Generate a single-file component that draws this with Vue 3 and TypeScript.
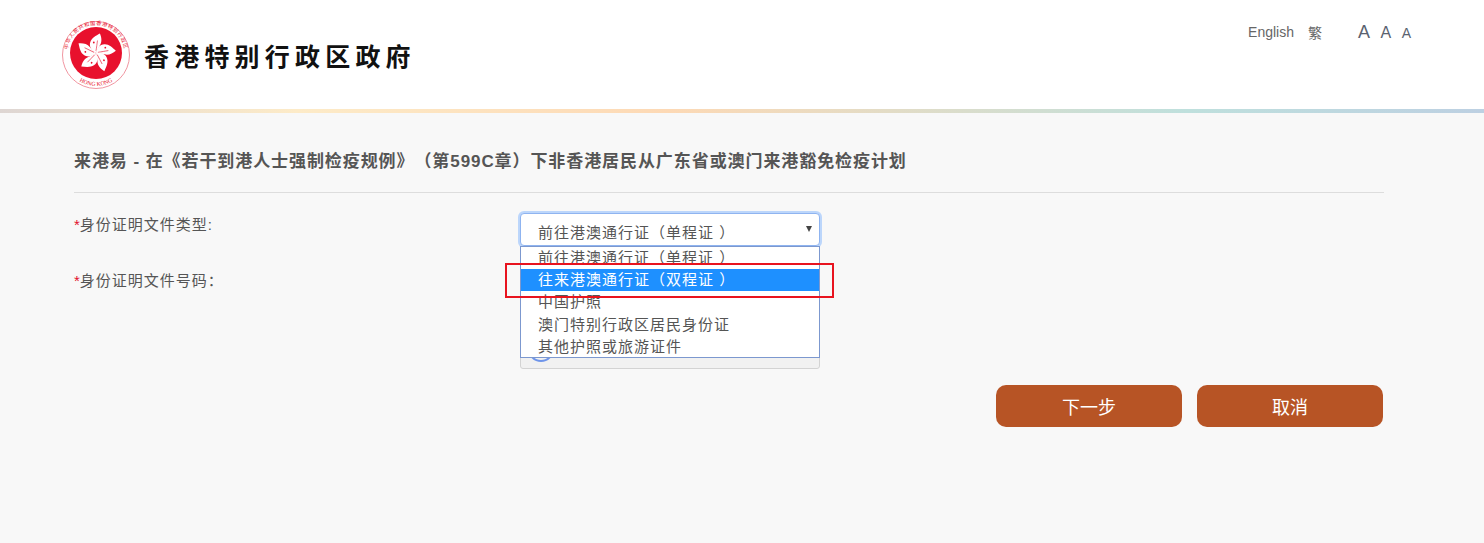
<script setup lang="ts">
const options = [
  "前往港澳通行证（单程证 ）",
  "往来港澳通行证（双程证 ）",
  "中国护照",
  "澳门特别行政区居民身份证",
  "其他护照或旅游证件",
];
const selected = 1;
const petals = [0, 72, 144, 216, 288];
</script>

<template>
  <div class="page">
    <header class="top">
      <div class="brand">
        <svg class="emblem" width="70" height="70" viewBox="0 0 70 70">
          <defs>
            <path id="ring-top" d="M 7.5 41 A 28.5 28.5 0 1 1 62.5 41" />
            <path id="ring-bottom" d="M 5.8 47 A 32 32 0 0 0 64.2 47" />
          </defs>
          <circle cx="35" cy="35" r="33.5" fill="#fff" stroke="#ee8a96" stroke-width="0.9" />
          <circle cx="35" cy="33" r="26" fill="#e8112d" />
          <text class="ring-text"><textPath href="#ring-top" startOffset="50%" text-anchor="middle">中华人民共和国香港特别行政区</textPath></text>
          <text class="ring-latin"><textPath href="#ring-bottom" startOffset="50%" text-anchor="middle">HONG KONG</textPath></text>
          <g v-for="a in petals" :key="a" :transform="`rotate(${a} 35 33)`">
            <path d="M35 33C30.5 30.8 27.6 26.3 29.4 21.8C30.7 17.9 35 15.6 38.9 13.4C40.6 17.3 41.2 21.8 38.9 25.2C37.8 27.4 36.1 29.6 35 33Z" fill="#fff" />
            <path d="M35 31C35.6 27 36 24 36.5 20.5" fill="none" stroke="#e8112d" stroke-width="0.6" />
            <circle cx="32.8" cy="22.5" r="0.9" fill="#e8112d" />
          </g>
        </svg>
        <span class="gov-name">香港特别行政区政府</span>
      </div>
      <div class="tools">
        <a class="lang">English</a>
        <a class="lang trad">繁</a>
        <div class="sizes">
          <span class="a-lg">A</span>
          <span class="a-md">A</span>
          <span class="a-sm">A</span>
        </div>
      </div>
    </header>
    <div class="rainbow"></div>

    <main class="content">
      <h1 class="title">来港易 - 在《若干到港人士强制检疫规例》（第599C章）下非香港居民从广东省或澳门来港豁免检疫计划</h1>

      <div class="form">
        <div class="labels">
          <label class="label first"><i>*</i>身份证明文件类型:</label>
          <label class="label second"><i>*</i>身份证明文件号码：</label>
        </div>
        <div class="fields">
          <div class="select">
            <span>{{ options[0] }}</span>
            <b class="caret"></b>
          </div>
          <div class="under">
            <span class="captcha-dot"></span>
          </div>
          <ul class="dropdown">
            <li v-for="(o, i) in options" :key="o" :class="{ active: i === selected }">{{ o }}</li>
          </ul>
          <div class="callout"></div>
        </div>
      </div>

      <div class="actions">
        <button class="btn">下一步</button>
        <button class="btn">取消</button>
      </div>
    </main>
  </div>
</template>

<style>
html, body {
  margin: 0;
  background: #f8f8f8;
}
</style>

<style scoped>
.page {
  width: 1484px;
  height: 543px;
  overflow: hidden;
  background: #f8f8f8;
  font-family: "Liberation Sans", "Noto Sans CJK SC", sans-serif;
  color: #555;
  text-spacing-trim: space-all;
}
.top {
  height: 109px;
  background: #fff;
  display: flex;
  justify-content: space-between;
  box-sizing: border-box;
  padding: 0 73px 0 61px;
}
.brand {
  display: flex;
  align-items: flex-start;
  padding-top: 20px;
}
.emblem {
  display: block;
}
.ring-text {
  font-size: 5.2px;
  fill: #e8112d;
  letter-spacing: 0.6px;
}
.ring-latin {
  font-size: 5.8px;
  fill: #e8112d;
  font-family: "Liberation Serif", serif;
}
.gov-name {
  margin: 21px 0 0 13px;
  font-size: 25px;
  line-height: 32px;
  font-weight: 700;
  letter-spacing: 5.2px;
  color: #111;
}
.tools {
  display: flex;
  align-items: center;
  height: 24px;
  margin-top: 20px;
  font-size: 14px;
}
.lang {
  color: #666;
}
.trad {
  margin-left: 14px;
  font-size: 14px;
}
.sizes {
  display: flex;
  align-items: baseline;
  gap: 10.5px;
  margin-left: 36px;
  color: #5a6270;
}
.a-lg { font-size: 18px; }
.a-md { font-size: 16px; }
.a-sm { font-size: 14px; }
.rainbow {
  height: 4px;
  background: linear-gradient(90deg, #ded6d3 0%, #fdebc8 20%, #fdd9b5 45%, #bfe0dd 80%, #bdd0e2 100%);
}
.content {
  margin: 0 100px 0 74px;
}
.title {
  margin: 0;
  padding: 38px 0 19px;
  border-bottom: 1px solid #ddd;
  font-size: 17px;
  line-height: 22px;
  font-weight: 700;
  letter-spacing: 0.92px;
  white-space: nowrap;
  color: #555;
}
.form {
  display: flex;
  margin-top: 20px;
}
.labels {
  width: 446px;
}
.label {
  display: block;
  font-size: 15px;
  line-height: 24px;
  letter-spacing: 1px;
  color: #555;
}
.label i {
  color: #e2122d;
  font-style: normal;
  letter-spacing: 0;
}
.second {
  margin-top: 32px;
}
.fields {
  position: relative;
  width: 300px;
}
.select {
  box-sizing: border-box;
  height: 33px;
  padding: 8px 0 0 17px;
  background: #fff;
  border: 1px solid #8fb4f0;
  border-radius: 4px;
  box-shadow: 0 0 0 2px #bcd6fb;
  font-size: 15px;
  line-height: 22px;
  letter-spacing: 1px;
  color: #555;
  position: relative;
}
.caret {
  position: absolute;
  right: 7px;
  top: 12px;
  border-left: 3px solid transparent;
  border-right: 3px solid transparent;
  border-top: 6px solid #444;
}
.under {
  box-sizing: border-box;
  height: 123px;
  background: #f1f1f1;
  border: 1px solid #d3d3d3;
  border-radius: 0 0 3px 3px;
}
.captcha-dot {
  position: absolute;
  left: 8px;
  top: 123px;
  width: 26px;
  height: 26px;
  box-sizing: border-box;
  border: 2px solid #6f95ea;
  border-radius: 50%;
}
.dropdown {
  position: absolute;
  left: 0;
  top: 33px;
  width: 300px;
  box-sizing: border-box;
  height: 112px;
  margin: 0;
  padding: 0;
  list-style: none;
  background: #fff;
  border: 1px solid #7c98cf;
  overflow: hidden;
}
.dropdown li {
  height: 22.2px;
  line-height: 21px;
  padding-left: 17px;
  font-size: 15px;
  letter-spacing: 1px;
  color: #555;
  white-space: nowrap;
}
.dropdown li.active {
  background: #1e90ff;
  color: #fff;
}
.callout {
  position: absolute;
  left: -15px;
  top: 50px;
  width: 329px;
  height: 35px;
  box-sizing: border-box;
  border: 2px solid #e8141f;
}
.actions {
  display: flex;
  justify-content: flex-end;
  gap: 15px;
  margin: 16px 1px 0 0;
}
.btn {
  width: 186px;
  height: 42px;
  padding: 0;
  border: none;
  border-radius: 10px;
  background: #b75425;
  color: #fff;
  font-family: inherit;
  font-size: 18px;
}
</style>
